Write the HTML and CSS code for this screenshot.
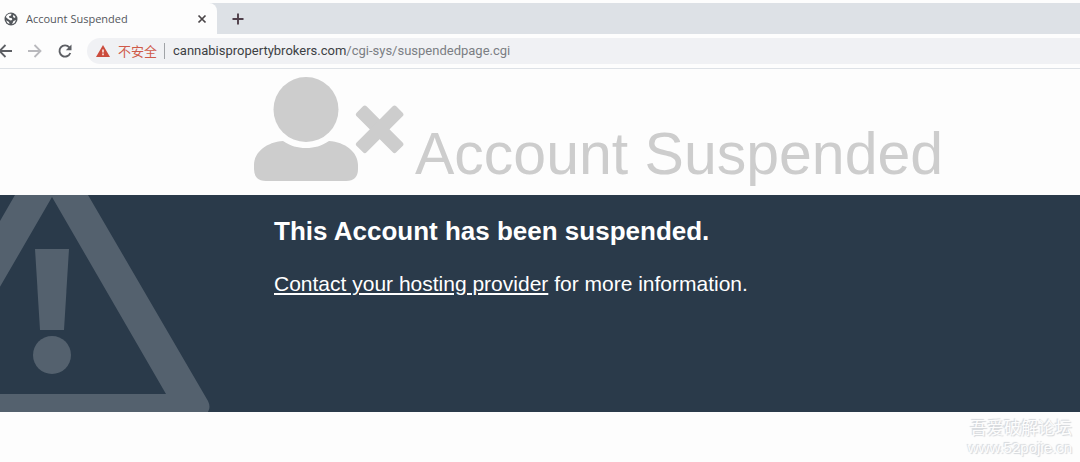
FILE: index.html
```html
<!DOCTYPE html>
<html lang="en">
<head>
<meta charset="utf-8">
<title>Account Suspended</title>
<link rel="stylesheet" href="styles.css">
</head>
<body>
<div class="tabstrip">
  <div class="tab">
    <svg class="globe" viewBox="0 0 14 14" aria-hidden="true"><circle cx="7" cy="7" r="6.500" fill="#53575c"/><path d="M1.800 5 3 3 5 1.800 7.500 1.700 7 3.500 5 4.200 5.300 5.800 8 6.200 8.200 8 6.500 8.500 4 7Z M9.500 2.800 11.500 5 10.500 6 9 5Z M2 8.300 5 10 5.500 12 3.500 11Z M9.500 9 12 8 10.500 11 8 12.300Z" fill="#fdfdfd"/></svg>
    <span class="tab-title">Account Suspended</span>
    <button class="icon-button" aria-label="Close tab"><svg class="close" viewBox="0 0 10 10"><path d="M1.500 1.500l7 7M8.500 1.500l-7 7" stroke="#4a4548" stroke-width="1.700"/></svg></button>
  </div>
  <button class="icon-button new-tab" aria-label="New tab"><svg class="plus" viewBox="0 0 12 12"><path d="M6 .5v11M.5 6h11" stroke="#4f3f4a" stroke-width="1.900"/></svg></button>
</div>
<div class="toolbar">
  <button class="icon-button" aria-label="Back"><svg class="nav-icon" viewBox="0 0 16 16"><path d="M15 8H3M8.500 2 2.500 8l6 6" fill="none" stroke="#5d5f64" stroke-width="1.800"/></svg></button>
  <button class="icon-button" aria-label="Forward"><svg class="nav-icon" viewBox="0 0 16 16"><path d="M1 8h12M7.500 2l6 6-6 6" fill="none" stroke="#b9b9bd" stroke-width="1.800"/></svg></button>
  <button class="icon-button" aria-label="Reload"><svg class="nav-icon" viewBox="0 0 16 16"><path d="M13.300 10A5.600 5.600 0 1 1 12.300 4.300" fill="none" stroke="#5d5f64" stroke-width="1.900"/><path d="M14.500 1.500v5.700H8.800Z" fill="#5d5f64"/></svg></button>
  <div class="address">
    <svg class="alert" viewBox="0 0 14 12" aria-hidden="true"><path d="M7 0l7 12H0Z" fill="#cb4b3c"/><path d="M7 4.500v3M7 8.500v1.700" stroke="#fff" stroke-width="1.400"/></svg>
    <span class="insecure" lang="zh">不安全</span>
    <span class="url"><span class="host">cannabispropertybrokers.com</span>/cgi-sys/suspendedpage.cgi</span>
  </div>
</div>
<header class="page-header">
  <svg class="user-x" viewBox="0 0 150 105" aria-hidden="true">
    <g fill="#cdcdcd"><circle cx="52" cy="32.500" r="32.500"/>
    <path d="M29 64C37 69 43 71 52 71S67 69 75 64C91 65 104 75 104 88V92Q104 104 92 104H12Q0 104 0 92V88C0 75 13 65 29 64Z"/>
    <g transform="rotate(45 126 52)"><rect x="98" y="45.500" width="56" height="14" rx="2.500"/><rect x="119" y="24.500" width="14" height="56" rx="2.500"/></g></g>
  </svg>
  <h1>Account Suspended</h1>
</header>
<main class="notice">
  <svg class="warning" viewBox="0 0 211 217" aria-hidden="true"><g fill="#54616e"><path fill-rule="evenodd" d="M15 0H88L208 206Q211 212 208 217H-105Q-109 212 -104 206ZM52 2-62 199H166Z"/><path d="M35 54H69L64 135H40Z"/><circle cx="52" cy="160" r="19"/></g></svg>
  <h2>This Account has been suspended.</h2>
  <p><a href="#">Contact your hosting provider</a> for more information.</p>
</main>
<footer class="watermark"><span lang="zh">吾爱破解论坛</span><span>www.52pojie.cn</span></footer>
</body>
</html>
```
FILE: styles.css
```css
* { box-sizing: border-box; }
body {
  margin: 0;
  background: #fdfdfd;
  font-family: "Liberation Sans", Arial, "Noto Sans CJK SC", sans-serif;
}
svg { display: block; }
.icon-button { padding: 0; border: 0; background: none; }
.tabstrip {
  display: flex;
  height: 34px;
  border-top: 3px solid #fdfdfd;
  background: #dde1e6;
}
.tab {
  display: flex;
  align-items: center;
  width: 217px;
  padding: 0 10px 0 4px;
  background: #fdfdfd;
  border-radius: 0 8px 0 0;
  font: 11px/16px "Open Sans", sans-serif;
  color: #54575c;
}
.globe { width: 14px; height: 14px; }
.tab-title { flex: 1; padding-left: 8px; }
.close { width: 10px; height: 10px; }
.new-tab { padding: 0 15px; }
.plus { width: 12px; height: 12px; }
.toolbar {
  display: flex;
  align-items: center;
  gap: 14px;
  height: 35px;
  margin-left: -3px;
  border-bottom: 1px solid #dde1e6;
}
.nav-icon { width: 16px; height: 16px; }
.address {
  flex: 1;
  display: flex;
  align-items: center;
  height: 26px;
  padding-left: 9px;
  border-radius: 13px 0 0 13px;
  background: #f0f1f4;
}
.alert { width: 14px; height: 12px; }
.insecure {
  margin-left: 8px;
  padding-right: 7px;
  border-right: 1px solid #a0a3a7;
  font: 13px/16px "Noto Sans CJK SC", sans-serif;
  color: #cf5a49;
}
.url { padding-left: 8px; color: #7b7e83; font: 13px/16px Roboto, sans-serif; }
.host { color: #3c4043; }
.page-header {
  display: flex;
  align-items: flex-start;
  gap: 11px;
  padding: 8px 0 10px 254px;
  color: #cdcdcd;
}
.user-x { width: 150px; height: 105px; }
h1 { margin: 0; padding-top: 46px; font-size: 59px; line-height: 62px; font-weight: 400; }
.notice {
  position: relative;
  min-height: 217px;
  padding: 20px 20px 20px 274px;
  background: #2a3a4a;
  color: #fff;
}
.warning { position: absolute; left: 0; top: 0; width: 211px; height: 217px; }
h2 { margin: 0 0 23px; font-size: 26px; line-height: 32px; }
p { margin: 0; font-size: 21px; line-height: 28px; }
a { color: inherit; }
.watermark {
  display: flex;
  flex-direction: column;
  align-items: flex-end;
  padding: 7px 8px 4px;
  font: 15px/18px "Liberation Sans", "Noto Sans CJK SC", sans-serif;
  color: #fdfdfd;
  text-shadow: 1px 1px 1px #d3d6da, -1px -1px 1px #d3d6da;
}
.watermark :first-child { font-size: 17px; line-height: 20px; }
```
